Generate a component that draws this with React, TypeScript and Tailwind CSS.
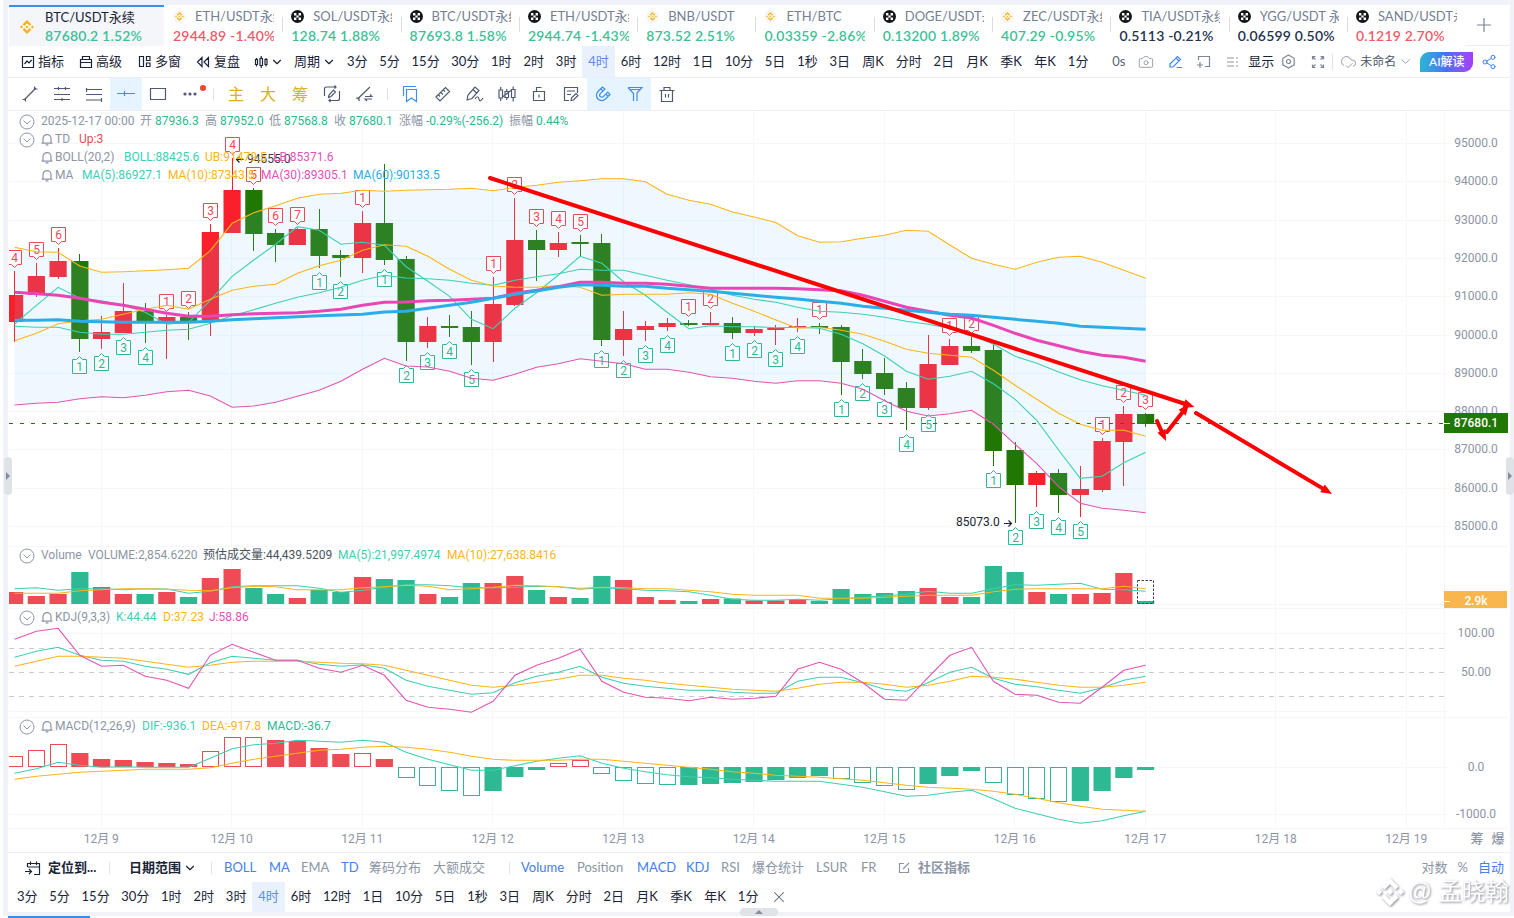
import { ReactNode } from "react";
import clsx from "clsx";
import { SiBinance } from "react-icons/si";
import { Camera, ChevronDown, CloudCheck, Plus, Share2, X } from "lucide-react";

const GREEN = "#2db992";
const RED = "#ef4b55";
const TEAL = "#3cd0b4";
const ORANGE = "#fdb515";
const PINK = "#e552b8";
const GRID = "#f6f7f9";

const STEP = 21.75;
const cx = (i: number) => 14.6 + STEP * i;

// direction, body top, body bottom, wick top, wick bottom
type Candle = ["u" | "d", number, number, number, number];

const candles: Candle[] = [
  ["u", 295, 322, 271, 342], ["u", 276, 295, 263, 297], ["u", 261, 277, 248, 279], ["d", 261, 339, 254, 352],
  ["u", 332, 339, 316, 349], ["u", 311, 333, 283, 333], ["d", 311, 322, 303, 343], ["u", 317, 322, 315, 359],
  ["d", 317, 322, 312, 340], ["u", 232, 320, 224, 336], ["u", 190, 233, 158, 233], ["d", 190, 234, 188, 251],
  ["d", 233, 245, 229, 262], ["u", 229, 245, 228, 245], ["d", 229, 256, 209, 268], ["d", 255, 258, 250, 277],
  ["u", 223, 258, 211, 273], ["d", 223, 260, 164, 265], ["d", 259, 342, 256, 361], ["u", 326, 342, 317, 348],
  ["d", 326, 328, 315, 337], ["d", 327, 342, 311, 365], ["u", 304, 342, 277, 362], ["u", 240, 305, 198, 306],
  ["d", 240, 250, 230, 281], ["u", 243, 250, 232, 257], ["d", 242, 244, 235, 256], ["d", 243, 340, 234, 346],
  ["u", 329, 340, 311, 356], ["u", 326, 330, 321, 341], ["u", 323, 327, 318, 331], ["d", 323, 325, 320, 326],
  ["u", 323, 325, 312, 325], ["d", 323, 333, 317, 339], ["u", 329, 333, 326, 336], ["u", 328, 330, 325, 345],
  ["u", 326, 328, 318, 332], ["d", 326, 328, 323, 334], ["d", 327, 362, 325, 395], ["d", 361, 374, 349, 379],
  ["d", 373, 389, 358, 395], ["d", 388, 408, 382, 430], ["u", 364, 408, 335, 410], ["u", 346, 365, 339, 365],
  ["d", 346, 351, 337, 353], ["d", 350, 451, 343, 466], ["d", 450, 485, 442, 523], ["u", 473, 485, 471, 507],
  ["d", 473, 495, 469, 513], ["u", 489, 495, 466, 517], ["u", 441, 490, 438, 492], ["u", 414, 442, 406, 486],
  ["d", 414, 424, 413, 427]
];

const upCounts: Record<number, number> = {
  0: 4, 1: 5, 2: 6, 7: 1, 8: 2, 9: 3, 10: 4, 11: 5, 12: 6, 13: 7, 16: 1, 22: 1, 23: 2, 24: 3, 25: 4, 26: 5,
  31: 1, 32: 2, 37: 1, 43: 1, 44: 2, 50: 1, 51: 2, 52: 3
};
const downCounts: Record<number, number> = {
  3: 1, 4: 2, 5: 3, 6: 4, 14: 1, 15: 2, 17: 1, 18: 2, 19: 3, 20: 4, 21: 5, 27: 1, 28: 2, 29: 3, 30: 4, 33: 1,
  34: 2, 35: 3, 36: 4, 38: 1, 39: 2, 40: 3, 41: 4, 42: 5, 45: 1, 46: 2, 47: 3, 48: 4, 49: 5
};

const upper = [
  247.3, 251.7, 252.3, 266, 272.3, 271.7, 270.7, 269.7, 268.3, 250.7, 223.3, 212.7, 205.7, 198.3, 194.3, 193.3, 190.3,
  191.3, 190.3, 189.7, 189.3, 188.3, 190.7, 187.5, 185.3, 182.3, 180.7, 178.7, 178.7, 181.7, 194.3, 200.3, 204.3, 212,
  217, 222.5, 235.7, 242.3, 241.7, 238.3, 235.3, 230.3, 231.3, 245, 258.3, 264.3, 269.3, 262.3, 257.3, 256.3, 262.3,
  270.3, 278.3
];
const lower = [
  405, 403.3, 402.3, 398.7, 396.7, 397.7, 395.3, 391.7, 390.3, 396, 407.3, 406, 402.3, 396.3, 390.3, 381.3, 369.3,
  358.3, 366, 367, 371.3, 378.3, 380.3, 374.3, 367.3, 363.7, 358.7, 361.3, 363.7, 369.3, 369.3, 372.3, 376.7, 378.3,
  381.3, 383.3, 380.7, 380.7, 383.3, 389.3, 400.7, 411.3, 416, 413.7, 410.3, 424.3, 444.3, 463.7, 486.7, 503.3, 508.3,
  510.3, 512.7
];
const middle = [
  326.3, 327.3, 327.3, 332.3, 334.3, 334.3, 332.3, 330.3, 329.3, 323.3, 315.7, 309.7, 303.3, 297.3, 292.7, 287.3,
  280.3, 275.3, 278, 278.7, 280.3, 283.3, 285.3, 280.3, 276.7, 273.7, 269.3, 270.3, 270.3, 275.3, 280.3, 284.7, 289,
  295.3, 299.3, 302.3, 307.3, 311.3, 312.3, 314.3, 317.3, 321.3, 324.3, 328.5, 335, 344.3, 356.3, 363.3, 372, 379.7,
  385.7, 390.3, 395.3
];
const ma5 = [
  324, 305.3, 287.3, 298.3, 300.7, 305.3, 312.3, 324.3, 322.3, 300.3, 276.3, 260, 244.3, 226.7, 230.3, 244.3, 242.3,
  245.3, 266.7, 281.3, 296.3, 319.3, 328.7, 308.3, 292.7, 275, 256.3, 263.3, 281.7, 295.3, 312.3, 328.7, 325.7, 326.7,
  326.7, 327.7, 327.3, 328.3, 334.3, 343.7, 356, 371.3, 379.3, 376.3, 371.3, 383.7, 399.3, 420.3, 450, 478.3, 476.3,
  462.7, 452.3
];
const ma10 = [
  340.7, 333.3, 323.7, 320.7, 319.3, 314.3, 309.3, 305.3, 309.3, 299.3, 290.3, 286.3, 284.3, 273.3, 265.7, 260.3,
  250.3, 244.7, 246.3, 256.3, 269.3, 280.3, 286, 287.3, 287.3, 285.5, 287.3, 295.3, 294.3, 294.3, 294.3, 292.7, 294.3,
  303.3, 311.3, 320, 328.3, 327.3, 330.3, 334.3, 341.3, 349.3, 353.3, 355.3, 357.3, 370.3, 385.3, 399.3, 413.3, 424.3,
  430.3, 430.3, 436.3
];
const ma30 = [
  292.3, 293.7, 295.3, 298.3, 302.3, 305.3, 309.3, 313.3, 316.3, 316.3, 314.7, 313.7, 313.3, 312.7, 311.3, 309.3,
  305.3, 302.3, 302, 300.7, 300.3, 299.3, 298.3, 293.3, 290.3, 286.7, 282.3, 282.3, 283.3, 283.3, 284.3, 286.3, 288.3,
  288.3, 288.3, 288.3, 288.7, 289.7, 290.7, 295.3, 301.3, 307.3, 311.3, 315.3, 318, 325.3, 333.3, 340.3, 345.7, 351.3,
  355.3, 357.3, 361.3
];
const ma60 = [
  320.3, 320.3, 319.7, 321.3, 321.7, 322.3, 322.3, 322.3, 322.3, 321.3, 319.7, 318.7, 317.7, 316.7, 315.7, 315, 314.3,
  312, 311.3, 308.3, 305.3, 302.3, 298.3, 294.3, 291, 287.3, 284.7, 285.3, 286.3, 286.3, 288.3, 289.7, 291.3, 293.3,
  295.3, 297.3, 299, 301.3, 303.3, 306.3, 308.3, 310.3, 312.3, 314.3, 315.3, 317.3, 319.3, 321.3, 323.3, 326.3, 327.3,
  328.3, 329.3
];

const volumeTops = [
  592, 596, 594, 572, 587, 594, 594, 592, 597, 578, 569, 588, 594, 598, 590, 592, 577, 579, 580, 594, 597, 583, 583,
  576, 590, 597, 598, 576, 580, 597, 600, 601, 599, 598.5, 600.5, 600.5, 599.5, 601, 589, 594, 593, 591, 588, 597, 597,
  566, 572, 592, 594, 594, 593, 573, 601
];
const volMa5 = [
  588.7, 587.7, 590.3, 588.7, 588.7, 589.7, 588.7, 589, 593.3, 591.3, 586.7, 585.7, 585.7, 585.7, 588.3, 592.3, 590.3,
  587.3, 584.7, 584.7, 585.7, 587.7, 587.7, 587.3, 586.3, 586.7, 589.3, 587.7, 588.7, 590.3, 590.7, 591.7, 595.3,
  599.3, 600.3, 600.3, 599.3, 600.3, 598.7, 597.3, 595.7, 594.3, 591.3, 593.3, 593.3, 588.7, 584.7, 585.3, 584.3,
  583.3, 589.3, 589.7, 591.3
];
const volMa10 = [
  593.3, 593.3, 593.3, 590.7, 589.7, 588.7, 588.7, 589.3, 590.3, 590.7, 587.7, 586.3, 586.7, 589.7, 589.7, 589.7,
  587.7, 586.7, 585.3, 586.3, 589.7, 588.7, 587.3, 585.3, 585.7, 586.7, 588.3, 587.3, 587.7, 588.7, 588.7, 590.3,
  591.7, 594.3, 595.3, 595.3, 595.3, 598.3, 598.3, 598.3, 597.3, 596.3, 595.3, 595.3, 595.3, 591.7, 589.3, 588.7,
  588.7, 588.7, 588.7, 586.3, 588.7
];

const kLine = [
  657.3, 651.3, 647.3, 655.3, 660.3, 661.3, 666.3, 669.3, 674.3, 662.7, 656.3, 658.3, 660.3, 660.3, 664.3, 666.3,
  664.7, 668.3, 680.3, 686.3, 690.3, 694.3, 692.7, 682.7, 676.3, 672.3, 666.3, 677.3, 683.3, 686.3, 688.3, 690.3,
  690.3, 692.3, 693.3, 693.3, 681.3, 677.3, 677.3, 682.7, 689.3, 691.3, 682.7, 672.3, 667.3, 678.3, 684.3, 686.7,
  690.3, 693.3, 687.7, 680.3, 676.3
];
const dLine = [
  666.3, 661.3, 656.3, 656.3, 657.3, 658.3, 661.3, 664.3, 667.3, 665.3, 662.3, 661.3, 661.3, 661.3, 662.3, 663.3,
  663.7, 665.3, 670.3, 675.3, 680.3, 685.3, 687.3, 685.3, 682.3, 679.3, 675.3, 675.3, 678.3, 680.3, 683.3, 685.3,
  687.3, 689.3, 690.3, 691.3, 688.3, 684.3, 682.3, 682.3, 684.3, 687.3, 685.3, 681.3, 676.3, 677.3, 679.3, 682.3,
  685.3, 687.3, 687.3, 685.3, 682.3
];
const jLine = [
  639.3, 631.3, 628.3, 655.3, 666.3, 665.3, 676.3, 680.3, 688.3, 655.3, 644.3, 652.3, 660.3, 660.3, 668.3, 672.3,
  665.3, 675.3, 700.3, 707.3, 709.3, 712.3, 701.3, 675.3, 665.3, 658.3, 649.3, 681.3, 692.3, 697.3, 698.3, 700.7,
  697.3, 699.3, 698.3, 696.3, 669.3, 662.3, 669.3, 682.7, 699.3, 700.3, 677.3, 655.3, 647.3, 681.3, 694.3, 695.3,
  702.3, 703.3, 687.3, 670.3, 665.3
];

const macdEnds = [
  756, 750, 744, 753, 759, 760, 762, 763, 764, 751, 737, 737, 740, 741, 748, 754, 753, 759, 778, 786, 791, 796, 791,
  777, 770, 763, 760, 774, 781, 784, 785, 785, 784, 783, 782, 780, 778, 776, 779, 783, 786, 790, 784, 776, 771, 783,
  795, 799, 802, 801, 791, 778, 770
];
const macdHollow = new Set([
  0, 1, 2, 9, 10, 11, 16, 18, 19, 20, 21, 25, 26, 27, 28, 29, 30, 38, 39, 40, 41, 45, 46, 47, 48
]);
const dif = [
  773.3, 768.7, 762.3, 765.3, 767.3, 766.7, 767.3, 767.3, 767.3, 758.3, 748.7, 744.7, 743.3, 740.3, 741.3, 742.3,
  740.3, 742.3, 752.3, 759.3, 764.7, 770.3, 770.3, 765.7, 761.3, 758.3, 755.7, 763.3, 768.3, 771.7, 774.7, 776.7,
  777.7, 779.3, 780.3, 781.3, 781.3, 781.3, 784.3, 787.3, 791.7, 796.3, 795.3, 792.3, 790.3, 798.7, 808.3, 813.7,
  819.3, 823.3, 820.7, 815.7, 811.3
];
const dea = [
  779.3, 776.3, 774.3, 772.3, 771.3, 770.3, 769.3, 769.3, 769.3, 767.7, 763.3, 759.3, 756.3, 753.3, 750.3, 749.3,
  747.3, 746.3, 747.3, 749.3, 752.3, 756.3, 759.3, 760.3, 760.3, 760.3, 759.3, 759.3, 761.3, 763.3, 765.3, 767.3,
  769.3, 771.7, 773.3, 775.3, 776.3, 777.3, 778.7, 780.3, 782.7, 785.3, 787.3, 788.3, 789.3, 791.3, 794.3, 798.3,
  802.7, 806.3, 809.3, 810.3, 811.3
];

const days = Array.from({ length: 11 }, (_, n) => ({ x: cx(4 + 6 * n), label: `12月 ${9 + n}` }));

const points = (ys: number[]) => ys.map((y, i) => `${cx(i).toFixed(1)},${y}`).join(" ");

function Line({ ys, color, width = 1.1 }: { ys: number[]; color: string; width?: number }) {
  return <polyline points={points(ys)} fill="none" stroke={color} strokeWidth={width} />;
}

function Pane({ top, height, rows, children, legend }: {
  top: number;
  height: number;
  rows: number[];
  children: ReactNode;
  legend?: ReactNode;
}) {
  return (
    <div className="relative">
      <svg
        width="1502"
        height={height}
        viewBox={`8 ${top} 1502 ${height}`}
        className="block font-['Roboto','Noto_Sans_CJK_SC',sans-serif] text-[12px]"
      >
        {days.map((day) => (
          <line key={day.x} x1={Math.round(day.x) - 0.5} x2={Math.round(day.x) - 0.5} y1={top} y2={top + height} stroke={GRID} />
        ))}
        <line x1="1444.5" x2="1444.5" y1={top} y2={top + height} stroke={GRID} />
        {rows.map((y) => (
          <line key={y} x1="9" x2="1449" y1={y} y2={y} stroke={GRID} />
        ))}
        <line x1="9" x2="1508" y1={top + height - 0.5} y2={top + height - 0.5} stroke={GRID} />
        {children}
      </svg>
      {legend}
    </div>
  );
}

function AxisLabel({ y, children }: { y: number; children: ReactNode }) {
  return (
    <text x="1476" y={y + 4} textAnchor="middle" fill="#8d95a3">
      {children}
    </text>
  );
}

function CountTag({ i, tip, count, above }: { i: number; tip: number; count: number; above: boolean }) {
  const x = Math.floor(cx(i)) + 0.5;
  const s = above ? -1 : 1;
  const near = tip + 3 * s;
  const far = tip + 17 * s;
  const color = above ? "#ec4a56" : GREEN;
  return (
    <g>
      <path
        d={`M${x - 7} ${near}H${x - 3}L${x} ${tip}L${x + 3} ${near}H${x + 7}V${far}H${x - 7}Z`}
        fill="#ffffff"
        fillOpacity="0.6"
        stroke={color}
      />
      <text x={x} y={(near + far) / 2 + 4.3} textAnchor="middle" fill={color}>
        {count}
      </text>
    </g>
  );
}

function Arrow({ from, to }: { from: [number, number]; to: [number, number] }) {
  const angle = Math.atan2(to[1] - from[1], to[0] - from[0]);
  const length = Math.hypot(to[0] - from[0], to[1] - from[1]);
  return (
    <g transform={`translate(${from[0]} ${from[1]}) rotate(${(angle * 180) / Math.PI})`} fill="#ff0000" stroke="none">
      <line x1="0" y1="0" x2={length - 8} y2="0" stroke="#ff0000" strokeWidth="4" strokeLinecap="round" />
      <path d={`M${length - 11} -4.5L${length} 0L${length - 11} 4.5Z`} />
    </g>
  );
}

function Collapse() {
  return (
    <svg width="16" height="16" viewBox="0 0 16 16" fill="none" stroke="#8c95a5" className="shrink-0">
      <circle cx="8" cy="8" r="7" />
      <path d="M4.5 6.5L8 10l3.5-3.5" />
    </svg>
  );
}

function Bell() {
  return (
    <svg width="12" height="13" viewBox="0 0 12 13" fill="none" stroke="#8c95a5" strokeWidth="1.2" className="shrink-0">
      <path d="M.5 10.2h11M2 10V5.6a4 4 0 0 1 8 0V10M4.6 11.9h2.8" />
    </svg>
  );
}

function LegendRow({ collapse, bell, children }: { collapse?: boolean; bell?: boolean; children: ReactNode }) {
  return (
    <div className="flex h-[18px] items-center whitespace-nowrap">
      <div className="w-[22px] pt-0.5">{collapse ? <Collapse /> : null}</div>
      {bell ? <Bell /> : null}
      <div className={clsx("flex items-center", bell && "pl-0.5")}>{children}</div>
    </div>
  );
}

const legendClass =
  "absolute left-[11px] text-[12px] leading-[18px] text-[#8c95a5] font-['Roboto','Noto_Sans_CJK_SC',sans-serif]";

function MainPane() {
  const band = `${points(upper)} ${lower.map((y, i) => `${cx(i).toFixed(1)},${y}`).reverse().join(" ")}`;
  return (
    <Pane
      top={111}
      height={436}
      rows={Array.from({ length: 11 }, (_, n) => Math.round(143 + n * 38.3) + 0.5)}
      legend={
        <div className={clsx(legendClass, "top-px")}>
          <LegendRow collapse>
            <span className="w-[99px]">2025-12-17 00:00</span>
            {[
              ["开", "87936.3", "w-[15px]", "w-[50px]"],
              ["高", "87952.0", "w-[15px]", "w-[49px]"],
              ["低", "87568.8", "w-[15px]", "w-[50px]"],
              ["收", "87680.1", "w-[15px]", "w-[50px]"],
              ["涨幅", "-0.29%(-256.2)", "w-[27px]", "w-[83px]"],
              ["振幅", "0.44%", "w-[27px]", "w-[40px]"]
            ].map(([label, value, labelWidth, valueWidth]) => (
              <span key={label} className="flex">
                <span className={labelWidth}>{label}</span>
                <span className={clsx(valueWidth, "text-[#2db992]")}>{value}</span>
              </span>
            ))}
          </LegendRow>
          <LegendRow collapse bell>
            <span className="w-6">TD</span>
            <span className="text-[#ec4a56]">Up:3</span>
          </LegendRow>
          <LegendRow bell>
            <span className="w-[69px]">BOLL(20,2)</span>
            <span className="w-[81px] text-[#3cd0b4]">BOLL:88425.6</span>
            <span className="w-[68px] text-[#fdb515]">UB:91479.5</span>
            <span className="text-[#e552b8]">LB:85371.6</span>
          </LegendRow>
          <LegendRow bell>
            <span className="w-[27px]">MA</span>
            <span className="w-[86px] text-[#3cd0b4]">MA(5):86927.1</span>
            <span className="w-[93px] text-[#fdb515]">MA(10):87343.5</span>
            <span className="w-[92px] text-[#e552b8]">MA(30):89305.1</span>
            <span className="text-[#2aaee8]">MA(60):90133.5</span>
          </LegendRow>
        </div>
      }
    >
      <clipPath id="plot">
        <rect x="9" y="111" width="1436" height="436" />
      </clipPath>
      <g clipPath="url(#plot)">
        {candles.map(([dir, top, bottom, high, low], i) => {
          const color = dir === "u" ? "#fb1f2b" : "#217703";
          return (
            <g key={i} fill={color}>
              <rect x={Math.round(cx(i) - 0.5)} y={high} width="1" height={low - high} />
              <rect x={cx(i) - 8.6} y={top} width="17.2" height={bottom - top} />
            </g>
          );
        })}
        <polygon points={band} fill="#84c9ff" fillOpacity="0.13" />
        {candles.map(([, , , high, low], i) => (
          <g key={i}>
            {upCounts[i] ? <CountTag i={i} tip={high - 3.5} count={upCounts[i]} above /> : null}
            {downCounts[i] ? <CountTag i={i} tip={low + 4.5} count={downCounts[i]} above={false} /> : null}
          </g>
        ))}
        <Line ys={middle} color={TEAL} />
        <Line ys={upper} color={ORANGE} />
        <Line ys={lower} color={PINK} />
        <Line ys={ma5} color={TEAL} />
        <Line ys={ma10} color={ORANGE} />
        <Line ys={ma30} color="#ea45b5" width={3} />
        <Line ys={ma60} color="#2aaee8" width={3} />
      </g>
      <text x="247" y="162.500" fill="#333b48">94555.0</text>
      <path d="M243.500 159.500h-7M239.500 156.500l-3 3 3 3" fill="none" stroke="#1c2434" strokeWidth="1.2" />
      <text x="956" y="526" fill="#1c2434">85073.0</text>
      <path d="M1004 523.5h7M1008.5 520.5l3 3-3 3" fill="none" stroke="#1c2434" strokeWidth="1.2" />
      <line x1="9" x2="1449" y1="423.5" y2="423.5" stroke="#217703" strokeDasharray="4 7" />
      {Array.from({ length: 11 }, (_, n) => (
        <AxisLabel key={n} y={143 + n * 38.3}>{`${95000 - n * 1000}.0`}</AxisLabel>
      ))}
      <rect x="1444" y="413" width="64" height="20" fill="#217703" />
      <line x1="1444" x2="1450" y1="423.5" y2="423.5" stroke="#ffffff" />
      <text x="1476" y="427.3" textAnchor="middle" fill="#ffffff" className="font-medium">
        87680.1
      </text>
      <Arrow from={[490, 178]} to={[1194.5, 407]} />
      <Arrow from={[1157, 421]} to={[1166, 441]} />
      <Arrow from={[1167, 432]} to={[1189, 404]} />
      <Arrow from={[1196, 413]} to={[1332, 494]} />
    </Pane>
  );
}

function VolumePane() {
  return (
    <Pane
      top={547}
      height={62}
      rows={[604.5]}
      legend={
        <div className={clsx(legendClass, "-top-px")}>
          <LegendRow collapse>
            <span className="w-[47px]">Volume</span>
            <span className="w-[115px]">VOLUME:2,854.6220</span>
            <span className="w-[135px] text-[#4a5260]">预估成交量:44,439.5209</span>
            <span className="w-[109px] text-[#3cd0b4]">MA(5):21,997.4974</span>
            <span className="text-[#fdb515]">MA(10):27,638.8416</span>
          </LegendRow>
        </div>
      }
    >
      <g clipPath="url(#bars)">
        <clipPath id="bars">
          <rect x="9" y="547" width="1436" height="62" />
        </clipPath>
        {volumeTops.map((y, i) => (
          <rect key={i} x={cx(i) - 8.6} y={y} width="17.2" height={604 - y} fill={candles[i][0] === "u" ? RED : GREEN} />
        ))}
      </g>
      <rect x="1137.5" y="580.5" width="16" height="23" fill="none" stroke="#3b4354" strokeDasharray="2.5 1.5" />
      <Line ys={volMa5} color={TEAL} />
      <Line ys={volMa10} color={ORANGE} />
      <rect x="1444" y="591" width="63" height="17" fill="#f8b64c" />
      <line x1="1444" x2="1450" y1="601.5" y2="601.5" stroke="#ffffff" />
      <text x="1476" y="605" textAnchor="middle" fill="#ffffff" className="font-medium">
        2.9k
      </text>
    </Pane>
  );
}

function KdjPane() {
  return (
    <Pane
      top={609}
      height={109}
      rows={[633.5, 711.5]}
      legend={
        <div className={clsx(legendClass, "-top-px")}>
          <LegendRow collapse bell>
            <span className="w-[61px]">KDJ(9,3,3)</span>
            <span className="w-[47px] text-[#3cd0b4]">K:44.44</span>
            <span className="w-[46px] text-[#fdb515]">D:37.23</span>
            <span className="text-[#e552b8]">J:58.86</span>
          </LegendRow>
        </div>
      }
    >
      {[648.5, 672.5, 696.5].map((y) => (
        <line key={y} x1="9" x2="1444" y1={y} y2={y} stroke="#c9cbcf" strokeDasharray="5 5" />
      ))}
      <Line ys={kLine} color={TEAL} />
      <Line ys={dLine} color={ORANGE} />
      <Line ys={jLine} color={PINK} />
      <AxisLabel y={633}>100.00</AxisLabel>
      <AxisLabel y={672}>50.00</AxisLabel>
    </Pane>
  );
}

function MacdPane() {
  return (
    <Pane
      top={718}
      height={111}
      rows={[767.5, 814.5]}
      legend={
        <div className={clsx(legendClass, "-top-px")}>
          <LegendRow collapse bell>
            <span className="w-[87px]">MACD(12,26,9)</span>
            <span className="w-[60px] text-[#3cd0b4]">DIF:-936.1</span>
            <span className="w-[65px] text-[#fdb515]">DEA:-917.8</span>
            <span className="text-[#2db992]">MACD:-36.7</span>
          </LegendRow>
        </div>
      }
    >
      <clipPath id="macd">
        <rect x="9" y="718" width="1436" height="111" />
      </clipPath>
      <g clipPath="url(#macd)">
        {macdEnds.map((end, i) => {
          const color = end < 767 ? RED : GREEN;
          const top = Math.min(end, 767);
          const height = Math.abs(end - 767);
          return macdHollow.has(i) ? (
            <rect key={i} x={Math.floor(cx(i)) - 7.5} y={top + 0.5} width="16" height={height - 1} fill="#ffffff" stroke={color} />
          ) : (
            <rect key={i} x={cx(i) - 8.6} y={top} width="17.2" height={height} fill={color} />
          );
        })}
      </g>
      <Line ys={dif} color={TEAL} />
      <Line ys={dea} color={ORANGE} />
      <AxisLabel y={767}>0.0</AxisLabel>
      <AxisLabel y={814}>-1000.0</AxisLabel>
    </Pane>
  );
}

function TimeAxis() {
  return (
    <div className="flex h-[24px] items-center border-b border-[#eceef3] pb-[3px] font-['Roboto','Noto_Sans_CJK_SC',sans-serif] text-[12px] text-[#8c95a5]">
      <div className="w-[28px] shrink-0" />
      {days.map((day) => (
        <div key={day.label} className="w-[130.5px] shrink-0 text-center whitespace-nowrap">
          {day.label}
        </div>
      ))}
      <div className="-ml-px flex gap-2 text-[13px] font-medium">
        <span>筹</span>
        <span>爆</span>
      </div>
    </div>
  );
}

type Tone = "green" | "red" | "dark";

const tones: Record<Tone, string> = {
  green: "text-[#3fbf98]",
  red: "text-[#ee5c69]",
  dark: "text-[#24324f]"
};

const tickers: { name: string; price: string; tone: Tone; exchange: "binance" | "okx" }[] = [
  { name: "ETH/USDT永续", price: "2944.89 -1.40%", tone: "red", exchange: "binance" },
  { name: "SOL/USDT永续", price: "128.74 1.88%", tone: "green", exchange: "okx" },
  { name: "BTC/USDT永续", price: "87693.8 1.58%", tone: "green", exchange: "okx" },
  { name: "ETH/USDT永续", price: "2944.74 -1.43%", tone: "green", exchange: "okx" },
  { name: "BNB/USDT", price: "873.52 2.51%", tone: "green", exchange: "binance" },
  { name: "ETH/BTC", price: "0.03359 -2.86%", tone: "green", exchange: "binance" },
  { name: "DOGE/USDT永续", price: "0.13200 1.89%", tone: "green", exchange: "okx" },
  { name: "ZEC/USDT永续", price: "407.29 -0.95%", tone: "green", exchange: "binance" },
  { name: "TIA/USDT永续", price: "0.5113 -0.21%", tone: "dark", exchange: "okx" },
  { name: "YGG/USDT 永", price: "0.06599 0.50%", tone: "dark", exchange: "okx" },
  { name: "SAND/USDT永续", price: "0.1219 2.70%", tone: "red", exchange: "okx" }
];

function OkxIcon() {
  return (
    <svg width="13" height="13" viewBox="0 0 13 13">
      <circle cx="6.5" cy="6.5" r="6.500" fill="#14171c" />
      <path d="M3 3h2.4v2.4H3zM7.6 3H10v2.4H7.6zM5.4 5.4h2.2v2.2H5.4zM3 7.6h2.4V10H3zM7.6 7.6H10V10H7.6z" fill="#ffffff" />
    </svg>
  );
}

function TickerBar() {
  return (
    <div className="flex h-[41px] pl-px">
      <div className="flex w-[155px] border-t-2 border-[#3b8be9] bg-[#f4f6fa] pl-[11px]">
        <div className="flex w-[25px] items-center">
          <SiBinance size={14} className="text-[#f9b014]" />
        </div>
        <div className="pt-px">
          <div className="h-[19px] text-[13px] leading-[18px] text-[#1a2437]">BTC/USDT永续</div>
          <div className="text-[14px] leading-[18px] font-semibold tracking-[0.2px] text-[#3fbf98]">87680.2 1.52%</div>
        </div>
      </div>
      {tickers.map((ticker, i) => (
        <div key={i} className="flex w-[118.3px] shrink-0">
          <div className={clsx("mt-3 h-[15px] w-px", i > 0 && "bg-[#d9dce3]")} />
          <div className="ml-2 w-[101px] overflow-hidden pt-[3px] whitespace-nowrap">
            <div className="flex h-[19px] items-center pb-0.5">
              <div className="w-[22px] shrink-0">
                {ticker.exchange === "okx" ? (
                  <OkxIcon />
                ) : (
                  <div className="flex size-[13px] items-center justify-center rounded-full bg-[#f6f6f9]">
                    <SiBinance size={9} className="text-[#fbb520]" />
                  </div>
                )}
              </div>
              <div className="text-[13px] leading-[17px] text-[#747f92]">{ticker.name}</div>
            </div>
            <div className={clsx("text-[14px] leading-[18px] font-semibold tracking-[0.2px]", tones[ticker.tone])}>
              {ticker.price}
            </div>
          </div>
        </div>
      ))}
      <div className="flex flex-1 items-center justify-center border-b border-[#eceef3] pr-2 text-[#7a8494]">
        <Plus size={22} strokeWidth={1.3} className="shrink-0" />
      </div>
    </div>
  );
}

const periods: [string, string][] = [
  ["3分", "w-[32.4px]"], ["5分", "w-[32.4px]"], ["15分", "w-[39.7px]"], ["30分", "w-[39.7px]"],
  ["1时", "w-[32.4px]"], ["2时", "w-[32.4px]"], ["3时", "w-[32.4px]"], ["4时", "w-[32.4px]"],
  ["6时", "w-[32.4px]"], ["12时", "w-[39.7px]"], ["1日", "w-[32.4px]"], ["10分", "w-[39.7px]"],
  ["5日", "w-[32.4px]"], ["1秒", "w-[32.4px]"], ["3日", "w-[32.4px]"], ["周K", "w-[34px]"],
  ["分时", "w-[37.5px]"], ["2日", "w-[32.4px]"], ["月K", "w-[34px]"], ["季K", "w-[34px]"],
  ["年K", "w-[34px]"], ["1分", "w-[32.4px]"]
];

function Periods() {
  return (
    <div className="flex h-full items-stretch">
      {periods.map(([label, width]) => (
        <button
          key={label}
          className={clsx(
            "flex items-center justify-center whitespace-nowrap",
            width,
            label === "4时" ? "bg-[#e9f1fd] text-[#5b8bf0]" : "text-[#1a2437]"
          )}
        >
          {label}
        </button>
      ))}
    </div>
  );
}

function Glyph({ size = 14, color = "#1a2437", className, children }: {
  size?: number;
  color?: string;
  className?: string;
  children: ReactNode;
}) {
  return (
    <svg width={size} height={size} viewBox={`0 0 ${size} ${size}`} fill="none" stroke={color} strokeWidth="1.2" className={clsx("shrink-0", className)}>
      {children}
    </svg>
  );
}

function MenuBar() {
  return (
    <div className="flex h-[32px] items-center border-b border-[#eceef3] pl-[13px] text-[13px] text-[#1a2437]">
      <div className="flex w-[58px] items-center gap-[3px]">
        <Glyph><path d="M1.5 1.5h11v11h-11zM3.5 9l2.5-3 2 2 2.7-3" /></Glyph>
        指标
      </div>
      <div className="flex w-[59px] items-center gap-[3px]">
        <Glyph><path d="M1.5 4.5h11v8h-11zM3.5 4.500V1.500h7V4.500M1 7.5h12" /></Glyph>
        高级
      </div>
      <div className="flex w-[58px] items-center gap-[3px]">
        <Glyph><path d="M1.5 1.500h4v10h-4zM8.5 1.500h3.5v4H8.5zM8.5 8h3.5v3.500H8.5z" /></Glyph>
        多窗
      </div>
      <div className="flex w-[58px] items-center gap-1">
        <Glyph><path d="M6 2.5L1.5 7 6 11.5zM12.5 2.5L8 7l4.5 4.5z" /></Glyph>
        复盘
      </div>
      <div className="flex w-[40px] items-center gap-0.5">
        <Glyph>
          <path d="M1.500 4.500h2v5h-2zM2.500 3v1.500M2.500 9.500v2M6 3.500h2.500v7H6zM7.250 1v2.500M7.250 10.500V13M11 4.500h2v5h-2zM12 3v1.500M12 9.500v2" />
        </Glyph>
        <ChevronDown size={14} />
      </div>
      <div className="flex w-[47px] items-center gap-0.5">
        周期
        <ChevronDown size={14} className="shrink-0" />
      </div>
      <Periods />
      <div className="flex h-full flex-1 items-center text-[#8b93a5]">
        <span className="ml-[18px] w-[26px] text-[#5a6579]">0s</span>
        <Camera size={16} strokeWidth={1.3} className="mr-[14px]" />
        <Glyph size={15} color="#3f86f0" className="mr-[13px]">
          <path d="M2 13v-3L9.500 2.500l3 3L5 13zM8 4l3 3M8.500 13.5H14" />
        </Glyph>
        <Glyph size={15} color="#7d8699" className="mr-[15px]">
          <path d="M2.5 6V2.5h11v10H9M1 11h6M4 8v6" />
        </Glyph>
        <Glyph color="#8b93a5" className="mr-[8px]">
          <path d="M1 3h7M1 7h7M1 11h7M10 3h2M10 7h2M10 11h2" />
        </Glyph>
        <span className="w-[33px] text-[#1a2437]">显示</span>
        <Glyph size={15} color="#7d8699" className="mr-[15px]">
          <path d="M7.5 1l5.7 3.3v6.5L7.5 14l-5.7-3.2V4.3z" />
          <circle cx="7.5" cy="7.5" r="2" />
        </Glyph>
        <Glyph color="#7d8699">
          <path d="M1.500 4.500v-3h3M1.500 1.500l3 3M9.500 1.500h3v3M12.500 1.500l-3 3M1.500 9.500v3h3M1.500 12.500l3-3M9.500 12.500h3v-3M12.500 12.500l-3-3" />
        </Glyph>
        <div className="ml-[7px] h-4 w-px bg-[#dfe2e8]" />
        <CloudCheck size={17} strokeWidth={1.3} className="ml-[7px]" />
        <span className="ml-[3px] w-[38px] text-[12px] whitespace-nowrap text-[#4b556a]">未命名</span>
        <ChevronDown size={15} strokeWidth={1.5} />
        <button className="ml-[7px] h-5 w-[53px] shrink-0 rounded-tl-[9px] rounded-br-[9px] bg-linear-to-r from-[#28b7d3] via-[#4a6cf8] to-[#a53cf7] text-[12px] font-medium text-white">
          AI解读
        </button>
        <Share2 size={16} strokeWidth={1.5} className="ml-[8px] text-[#3f86f0]" />
      </div>
    </div>
  );
}

const C = "#4d5a70";
const BLUE = "#3f8ef0";

function Tool({ active, children }: { active?: boolean; children: ReactNode }) {
  return (
    <button className={clsx("relative flex h-full w-8 items-center justify-center", active && "bg-[#e6f4ff]")}>
      {children}
    </button>
  );
}

function ToolDivider({ className }: { className: string }) {
  return (
    <div className={clsx("flex justify-center", className)}>
      <div className="h-3 w-px bg-[#dfe2e8]" />
    </div>
  );
}

function DrawingBar() {
  return (
    <div className="flex h-[33px] items-center border-b border-[#eceef3] pl-1.5 text-[16px] text-[#dcae22]">
      <Tool><Glyph size={18} color={C}><path d="M3 15L15 3" /><path d="M1.5 14.5h3v2M13.5 1.5V4h3" /></Glyph></Tool>
      <Tool><Glyph size={18} color={C}><path d="M1 3.5h16M1 9.5h16M1 14.5h16M5.5 2v3M12.5 2v3M9 13v3" /></Glyph></Tool>
      <Tool><Glyph size={18} color={C}><path d="M1 4.5h16M1 9.5h16M1 15h16M1.5 3v4M16.5 13v4" /></Glyph></Tool>
      <Tool active><Glyph size={18} color={BLUE}><path d="M0 8.500h18M7.500 6v5" /></Glyph></Tool>
      <Tool><Glyph size={18} color={C}><path d="M1.5 3.5h15v11h-15z" /></Glyph></Tool>
      <Tool>
        <svg width="14" height="4" viewBox="0 0 14 4" fill={C}>
          <circle cx="2" cy="2" r="1.6" /><circle cx="7" cy="2" r="1.6" /><circle cx="12" cy="2" r="1.6" />
        </svg>
        <span className="absolute top-[7px] right-0 size-[6px] rounded-full bg-[#f0432c]" />
      </Tool>
      <ToolDivider className="w-[14px]" />
      <Tool>主</Tool>
      <Tool>大</Tool>
      <Tool>筹</Tool>
      <Tool>
        <Glyph size={18} color={C}>
          <path d="M1.500 11V4q0-2 2-2h9M11.500 .5L13 2l-1.500 1.500M16.500 6v7.500q0 2-2 2H6M7.500 14L6 15.500 7.500 17M5.500 12.500l.5-2.500L10.500 5l2 2L8 11.500z" />
        </Glyph>
      </Tool>
      <Tool><Glyph size={18} color={C}><path d="M2.500 14L15 2M1 13h3v3M10 11.5h7l-2-2M17 14h-7l2 2" /></Glyph></Tool>
      <ToolDivider className="w-[15px]" />
      <Tool><Glyph size={18} color={BLUE}><path d="M1.500 11V1.5H14M4.500 4.5h10v12l-5-3.5-5 3.5z" /></Glyph></Tool>
      <Tool><Glyph size={18} color={C}><path d="M2 12L11.5 2.5l4 4L6 16zM7 7.500l2 2M9.5 5l1.500 1.500M4.500 10l1.500 1.500" /></Glyph></Tool>
      <Tool><Glyph size={20} color={C}><path d="M2 16l1-5 7-8 4 3.500-7 8zM8 5.500L11.500 9M10 15c2-3 3.500-3 4 0s2 2 4-1" /></Glyph></Tool>
      <Tool><Glyph size={18} color={C}><path d="M1 5h3.500v8H1zM2.700 2v3M2.700 13v3M7 6.500h3.500v6H7zM8.700 4v2.500M8.700 12.500V15M13.500 4.500H17v8h-3.500zM15.200 1.500v3M15.200 12.500v4M4.500 12L13.500 5" /></Glyph></Tool>
      <Tool><Glyph size={18} color={C}><path d="M3.500 6.500h11v9h-11zM6.500 6.500v-4h5M9 9.500v3" /></Glyph></Tool>
      <Tool><Glyph size={18} color={C}><path d="M7 15.500H2.500v-13h13V8M5 6h8M5 9.500h4M9 15.500l.5-2.500 4.500-4.500 2 2-4.500 4.500z" /></Glyph></Tool>
      <Tool active>
        <Glyph size={18} color={BLUE}>
          <path d="M8.500 2L4 6.500a5.200 5.200 0 0 0 7.500 7.500L16 9.500 13.700 7.200 9.300 11.600a2 2 0 0 1-3-3L11 4zM6.800 3.700L9 6M11.800 9l2.300 2.200" />
        </Glyph>
      </Tool>
      <Tool active><Glyph size={18} color={BLUE}><path d="M2 2.500h14L11 8v8M2 2.500L7.500 8.500V16M4 4.500h10" /></Glyph></Tool>
      <Tool><Glyph size={18} color={C}><path d="M1.500 5.500h15M3.500 5.500v11h11v-11M6 5V2.500h6V5M7.500 9v3.500M10.500 9v3.500" /></Glyph></Tool>
    </div>
  );
}

const indicators: { label: string; width: string; active?: boolean }[] = [
  { label: "BOLL", width: "w-[45px]", active: true },
  { label: "MA", width: "w-[32px]", active: true },
  { label: "EMA", width: "w-[40px]" },
  { label: "TD", width: "w-[28px]", active: true },
  { label: "筹码分布", width: "w-[64px]" },
  { label: "大额成交", width: "w-[76px]" }
];

const subIndicators: { label: string; width: string; active?: boolean }[] = [
  { label: "Volume", width: "w-[56px]", active: true },
  { label: "Position", width: "w-[60px]" },
  { label: "MACD", width: "w-[49px]", active: true },
  { label: "KDJ", width: "w-[35px]", active: true },
  { label: "RSI", width: "w-[31px]" },
  { label: "爆仓统计", width: "w-[64px]" },
  { label: "LSUR", width: "w-[45px]" },
  { label: "FR", width: "w-[37px]" }
];

function IndicatorList({ items }: { items: typeof indicators }) {
  return (
    <>
      {items.map((item) => (
        <span key={item.label} className={clsx("whitespace-nowrap", item.width, item.active && "text-[#4380ee]")}>
          {item.label}
        </span>
      ))}
    </>
  );
}

function BottomBar() {
  return (
    <>
      <div className="flex h-[29px] items-center pt-px pl-4 text-[13px] text-[#8c95a5]">
        <Glyph size={17} className="mr-[7px]">
          <path d="M3.5 7V3.5h12v11H10M6.5 1.5V5M12.5 1.5V5M3.5 7h12M1 11.5h6.5M5 9l2.5 2.5L5 14" />
        </Glyph>
        <span className="w-[61px] font-bold text-[#1a2437]">定位到...</span>
        <div className="mr-[19px] h-3 w-px bg-[#dfe2e8]" />
        <span className="w-[54px] font-bold whitespace-nowrap text-[#1a2437]">日期范围</span>
        <ChevronDown size={14} className="mr-[14px] shrink-0 text-[#1a2437]" />
        <div className="mr-3 h-3 w-px bg-[#dfe2e8]" />
        <IndicatorList items={indicators} />
        <div className="mr-[11px] h-3 w-px bg-[#dfe2e8]" />
        <IndicatorList items={subIndicators} />
        <Glyph size={12} color="#8c95a5" className="mr-2">
          <path d="M6 1.5H1.5v9h9V6M5 7l6-6" />
        </Glyph>
        <span className="font-bold">社区指标</span>
        <div className="ml-auto flex gap-[10px] pr-[6px]">
          <span>对数</span>
          <span>%</span>
          <span className="text-[#4380ee]">自动</span>
        </div>
      </div>
      <div className="flex h-[30px] items-center pl-[3px] text-[13px]">
        <Periods />
        <X size={18} strokeWidth={1.4} className="ml-[6px] text-[#5d687b]" />
      </div>
    </>
  );
}

export default function App() {
  return (
    <div className="relative h-[918px] w-[1514px] overflow-hidden bg-white font-['Lato','Noto_Sans_CJK_SC',sans-serif]">
      <div className="ml-[3px] h-[916px] bg-[#f1f2f7] pt-[5px] pr-1 pl-[5px]">
        <div className="h-[907px] bg-white">
          <TickerBar />
          <MenuBar />
          <DrawingBar />
          <MainPane />
          <VolumePane />
          <KdjPane />
          <MacdPane />
          <TimeAxis />
          <BottomBar />
        </div>
      </div>
      <div className="ml-2 h-[2px] w-[82px] bg-[#3b8be9]" />

      <div className="absolute top-[457px] left-1 flex h-[38px] w-2 items-center justify-center rounded-sm bg-[#dfe3e8]">
        <div className="border-y-[4px] border-l-[4px] border-y-transparent border-l-[#868e9c]" />
      </div>
      <div className="absolute top-[457px] left-[1506px] flex h-[38px] w-2 items-center justify-center rounded-sm bg-[#dfe3e8]">
        <div className="border-y-[4px] border-l-[4px] border-y-transparent border-l-[#868e9c]" />
      </div>
      <div className="absolute top-[908px] left-[740px] flex h-2 w-[38px] items-center justify-center rounded-sm bg-[#dfe3e8]">
        <div className="border-x-[4px] border-b-[4px] border-x-transparent border-b-[#868e9c]" />
      </div>
      <div className="absolute top-[876px] left-[1376px] flex items-center gap-1 text-[24px] leading-[32px] whitespace-nowrap text-white drop-shadow-[1px_1px_1px_rgba(60,65,80,0.6)]">
        <SiBinance size={28} />
        <span className="font-['Liberation_Sans','Noto_Sans_CJK_SC',sans-serif] text-[23.5px]">@ 孟晓翰</span>
      </div>
    </div>
  );
}
